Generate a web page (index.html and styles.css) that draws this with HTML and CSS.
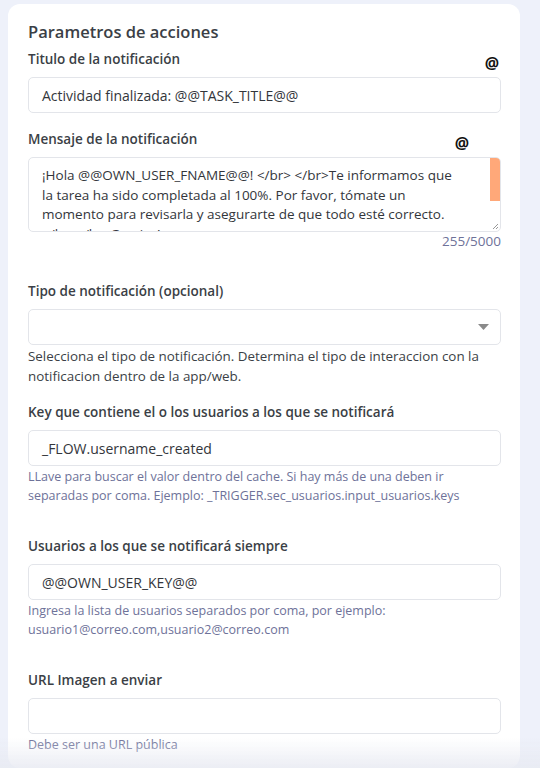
FILE: index.html
```html
<!DOCTYPE html>
<html lang="es">

<head>
    <meta charset="UTF-8">
    <meta name="viewport" content="width=device-width, initial-scale=1.0">
    <title>Parametros de acciones</title>
    <link rel="stylesheet" href="styles.css">
</head>

<body>
    <div class="card">
        <h2 class="card-title">Parametros de acciones</h2>

        <div class="field">
            <div class="label-row">
                <label class="label">Titulo de la notificación</label>
                <span class="at at-title">@</span>
            </div>
            <div class="input">Actividad finalizada: @@TASK_TITLE@@</div>
        </div>

        <div class="field">
            <div class="label-row">
                <label class="label">Mensaje de la notificación</label>
                <span class="at at-msg">@</span>
            </div>
            <div class="textarea">
                <div class="textarea-text">¡Hola @@OWN_USER_FNAME@@! &lt;/br&gt; &lt;/br&gt;Te informamos que<br>la tarea ha sido completada al 100%. Por favor, tómate un<br>momento para revisarla y asegurarte de que todo esté correcto.<br>&lt;/br&gt;&lt;/br&gt;Gracias!</div>
                <div class="scrollbar"></div>
                <svg class="grip" width="8" height="8" viewBox="0 0 8 8">
                    <path d="M7 2 L2 7 M7 5 L5 7" stroke="#999" stroke-width="1" fill="none" />
                </svg>
            </div>
            <div class="counter">255/5000</div>
        </div>

        <div class="field field-gap">
            <label class="label">Tipo de notificación (opcional)</label>
            <div class="input select">
                <svg class="caret" width="11" height="6" viewBox="0 0 11 6">
                    <path d="M0 0 H11 L5.5 6 Z" fill="#8a8a8a" />
                </svg>
            </div>
            <p class="help help-dark">Selecciona el tipo de notificación. Determina el tipo de interaccion con la notificacion dentro de la app/web.</p>
        </div>

        <div class="field">
            <label class="label">Key que contiene el o los usuarios a los que se notificará</label>
            <div class="input">_FLOW.username_created</div>
            <p class="help">LLave para buscar el valor dentro del cache. Si hay más de una deben ir separadas por coma. Ejemplo: _TRIGGER.sec_usuarios.input_usuarios.keys</p>
        </div>

        <div class="field field-gap">
            <label class="label">Usuarios a los que se notificará siempre</label>
            <div class="input">@@OWN_USER_KEY@@</div>
            <p class="help">Ingresa la lista de usuarios separados por coma, por ejemplo: usuario1@correo.com,usuario2@correo.com</p>
        </div>

        <div class="field field-gap">
            <label class="label">URL Imagen a enviar</label>
            <div class="input"></div>
            <p class="help">Debe ser una URL pública</p>
        </div>
    </div>
    <div class="fade"></div>
</body>

</html>
```

FILE: styles.css
```css
body {
    margin: 0;
    padding: 4px 20px 0 8px;
    background: #eef1fa;
    font-family: 'Open Sans', sans-serif;
    color: #34373d;
    height: 764px;
    overflow: hidden;
}

.card {
    display: flex;
    flex-direction: column;
    background: #ffffff;
    border-radius: 12px;
    padding: 16px 19px 40px 20px;
    height: 100%;
    box-sizing: border-box;
}

.card-title {
    margin: 0 0 5px 0;
    font-size: 16.5px;
    font-weight: 600;
    color: #3b3f46;
    line-height: 24px;
}

.field {
    display: flex;
    flex-direction: column;
    margin-bottom: 16px;
}

.field-gap {
    margin-top: 15px;
}

.label-row {
    position: relative;
}

.label {
    display: block;
    font-size: 13.5px;
    font-weight: 600;
    color: #3b3f46;
    line-height: 20px;
    margin-bottom: 8px;
}

.at {
    position: absolute;
    font-weight: 700;
    font-size: 16px;
    line-height: 16px;
    color: #111;
}

.at-title {
    right: 2px;
    top: 6px;
}

.at-msg {
    right: 32px;
    top: 6px;
}

.input {
    height: 36px;
    border: 1px solid #e3e5ea;
    border-radius: 5px;
    box-sizing: border-box;
    padding: 0 13px;
    display: flex;
    align-items: center;
    font-size: 14px;
    color: #33363b;
}

.select {
    justify-content: flex-end;
    padding-right: 11px;
}

.textarea {
    position: relative;
    height: 75px;
    border: 1px solid #e3e5ea;
    border-radius: 5px;
    box-sizing: border-box;
    overflow: hidden;
}

.textarea-text {
    padding: 8px 16px 0 13px;
    font-size: 13.5px;
    line-height: 19.5px;
    color: #33363b;
    white-space: nowrap;
}

.scrollbar {
    position: absolute;
    top: 0;
    right: 0;
    width: 10px;
    height: 43px;
    background: #ffa879;
}

.grip {
    position: absolute;
    right: 1px;
    bottom: 1px;
}

.counter {
    text-align: right;
    font-size: 13.5px;
    color: #6e7299;
    line-height: 18px;
}

.help {
    margin: 1px 0 0 0;
    font-size: 12.5px;
    line-height: 19px;
    color: #6e7299;
}

.help-dark {
    font-size: 13.4px;
    line-height: 20px;
    color: #3b3f46;
}

.fade {
    position: fixed;
    left: 0;
    right: 0;
    bottom: 0;
    height: 30px;
    background: linear-gradient(rgba(232, 234, 242, 0), rgba(232, 234, 242, 0.85));
}
```
